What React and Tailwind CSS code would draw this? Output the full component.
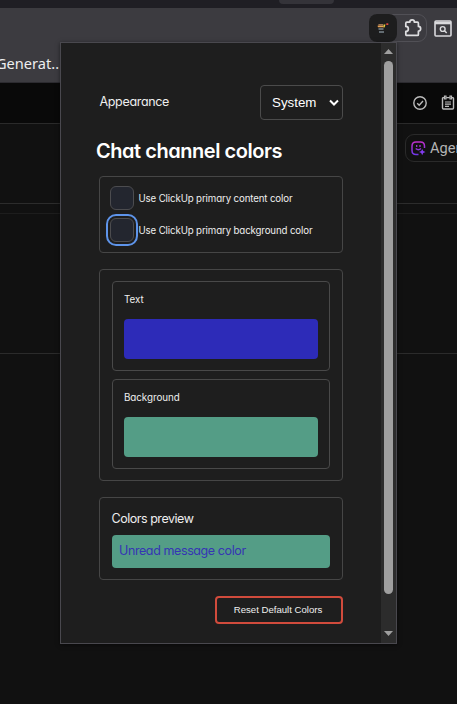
import React from "react";

const brandFont = "font-['Inter','Liberation_Sans',sans-serif] [font-feature-settings:'cv11','ss03']";

function Swatch({ label, color }) {
  return (
    <div className="h-[90px] rounded border border-[#494949] px-[11px]">
      <div className="flex h-[37px] items-center pb-px text-[9.8px] tracking-[-0.05px]">
        <span>{label}</span>
      </div>
      <div className={`h-10 rounded ${color}`} />
    </div>
  );
}

function Check({ label, focused }) {
  return (
    <div className="flex h-6 items-center gap-[4.5px]">
      <div
        className={`h-6 w-6 shrink-0 rounded-[6px] border border-[#4c4c4f] bg-[#23262f] ${
          focused ? "outline-2 outline-offset-2 outline-[#5e94ea]" : ""
        }`}
      />
      <span className="whitespace-nowrap pt-0.5 text-[9.7px] tracking-[-0.13px]">{label}</span>
    </div>
  );
}

function Popup() {
  return (
    <div className="absolute left-[60px] top-[42px] flex h-[602px] w-[337px] border border-[#49484e] bg-[#1e1e1e] text-[#eeeeee] shadow-[0_1px_4px_rgba(0,0,0,0.5)]">
      <main className={`w-[320px] pl-[38px] pr-[38px] pt-[42px] ${brandFont}`}>
        <div className="flex h-[35px] items-center justify-between">
          <span className="pl-[0.5px] text-[12.5px] tracking-[-0.33px]">Appearance</span>
          <div className="flex h-[35px] w-[83px] items-center justify-between rounded border border-[#4b4b4b] pl-[11px] pr-[3px] font-['Liberation_Sans',sans-serif] text-[13.33px] text-white">
            <span>System</span>
            <svg width="10" height="8" viewBox="0 0 10 8" fill="none" stroke="white" strokeWidth="2">
              <path d="M1 1.5 5 5.5 9 1.5" />
            </svg>
          </div>
        </div>
        <h1 className="-ml-[3px] mt-[15px] h-8 whitespace-nowrap text-[20px] font-semibold leading-8 tracking-[-0.46px] text-white">
          Chat channel colors
        </h1>
        <section className="mt-[9px] flex h-[77px] flex-col gap-2 rounded border border-[#464646] px-2.5 pt-[9px]">
          <Check label="Use ClickUp primary content color" />
          <Check label="Use ClickUp primary background color" focused />
        </section>
        <section className="mt-4 flex h-[212px] flex-col gap-2 rounded border border-[#464646] px-3 pt-[11px]">
          <Swatch label="Text" color="bg-[#2d2bb8]" />
          <Swatch label="Background" color="bg-[#549d86]" />
        </section>
        <section className="mt-4 h-[83px] rounded border border-[#464646] px-3 pt-[11px]">
          <div className="-ml-[0.5px] h-[26px] text-[12.5px] leading-[19px] tracking-[-0.47px]">Colors preview</div>
          <div className="flex h-[33px] items-center rounded bg-[#549d86] pl-[7px] text-[12.5px] tracking-[-0.4px] text-[#3535b4]">
            Unread message color
          </div>
        </section>
        <button className="ml-auto mt-4 flex h-7 w-32 items-center justify-center whitespace-nowrap rounded border-2 border-[#d14b3c] pr-0.5 pt-px font-['Liberation_Sans',sans-serif] text-[9.6px]">
          Reset Default Colors
        </button>
      </main>
      <div className="flex w-[15px] flex-col items-center bg-[#2c2c2c] pt-1.5">
        <svg width="9" height="5" viewBox="0 0 9 5" fill="#9f9f9f"><path d="M0 5 4.5 0 9 5Z" /></svg>
        <div className="mt-[7px] h-[533px] w-[9px] rounded-full bg-[#9f9f9f]" />
        <svg className="mt-[37px]" width="9" height="5" viewBox="0 0 9 5" fill="#9f9f9f"><path d="M0 0 4.5 5 9 0Z" /></svg>
      </div>
    </div>
  );
}

function ExtensionLogo() {
  return (
    <svg width="12" height="11" viewBox="0 0 12 11">
      <path d="M1.5 1.2H6V2.6H1.2Z" fill="#c99564" />
      <path d="M0.5 2.8H6.5V4.2H1Z" fill="#e9a354" />
      <path d="M6.5 1.5H8.5L7.5 4.5H6.5Z" fill="#ead13e" />
      <path d="M9.3 .3H11.3V2H9.3Z" fill="#e44740" />
      <path d="M1.5 6H6.5M2 9H7" stroke="#7b878e" strokeWidth="1.4" />
    </svg>
  );
}

export default function App() {
  return (
    <div className="relative h-[704px] w-[457px] overflow-hidden bg-[#111111] font-['Noto_Sans',sans-serif]">
      <div className="flex h-2 bg-[#1f1e24] pl-[279px]">
        <div className="h-1 w-[55px] rounded-b-md bg-[#343339]" />
      </div>
      <div className="h-[75px] border-b border-[#2c2b30] bg-[#3c3b40]">
        <div className="flex h-10 items-center pl-[369px]">
          <div className="flex h-7 w-[58px] items-center rounded-[9px] border border-[#515056]">
            <div className="-ml-px flex h-7 w-7 shrink-0 items-center justify-center rounded-[8px] bg-[#1d1d1e]">
              <ExtensionLogo />
            </div>
            <svg className="ml-[7px]" width="18" height="18" viewBox="0 0 18 18" fill="none" stroke="#dedee0" strokeWidth="1.7" strokeLinejoin="round">
              <path d="M2.8 3.2H5.8C5.8 .2 10.4 .2 10.4 3.2H13.4Q14.4 3.2 14.4 4.2V7.4C17.4 7.4 17.4 12.2 14.4 12.2V15.4Q14.4 16.4 13.4 16.4H2.8Q1.8 16.4 1.8 15.4V12.4C5.2 12.4 5.2 7.4 1.8 7.4V4.2Q1.8 3.2 2.8 3.2Z" />
            </svg>
          </div>
          <svg className="ml-[7px] shrink-0" width="18" height="17" viewBox="0 0 18 17" fill="none" stroke="#d9d9dc">
            <rect x="1" y="1" width="16" height="15" rx="1" strokeWidth="1.6" />
            <path d="M1 3H17" strokeWidth="2.6" />
            <circle cx="8.7" cy="9" r="2.4" strokeWidth="1.4" />
            <path d="m10.5 10.8 2.2 2.2" strokeWidth="1.5" />
          </svg>
        </div>
        <div className="-ml-[4px] pt-[4px] text-[14.6px] leading-[22px] text-[#eeeeef]">Generat..</div>
      </div>
      <div className="flex h-[41px] items-center gap-3.5 border-b border-[#2a2a2a] bg-[#090909] pl-[413px]">
        <svg className="shrink-0" width="14" height="14" viewBox="0 0 14 14" fill="none" stroke="#bcbcbc" strokeWidth="1.4">
          <circle cx="7" cy="7" r="6.2" />
          <path d="m4.2 7.2 2 2L10 5.1" />
        </svg>
        <svg className="mb-px shrink-0" width="14" height="15" viewBox="0 0 14 15" fill="none" stroke="#bcbcbc" strokeWidth="1.4">
          <path d="M3 2.6H2.5Q1.5 2.6 1.5 3.6V13Q1.5 14 2.5 14H11.5Q12.5 14 12.5 13V3.6Q12.5 2.6 11.5 2.6H11M5.3 2.6H8.7" />
          <path d="M3.5 1H5V4H3.5ZM9 1H10.5V4H9ZM4 7H10M4 9.2H10M4 11.4H8" strokeWidth="1.2" />
        </svg>
      </div>
      <div className="h-20 border-b border-[#2c2c2c] pl-[405px] pt-2.5">
        <div className="flex h-7 w-24 items-center rounded-[9px] border border-[#2a2a2a] pl-[5px]">
          <svg className="shrink-0" width="15" height="15" viewBox="0 0 15 15" fill="none">
            <defs>
              <linearGradient id="agent" x1="0" y1="0" x2="0" y2="15" gradientUnits="userSpaceOnUse">
                <stop stopColor="#c22ec8" />
                <stop offset="1" stopColor="#6937ec" />
              </linearGradient>
            </defs>
            <path d="M7.5 13.5H5Q1 13.5 1 9.5V5.2Q1 1 5 1H9.5Q13.5 1 13.5 5.2V7" stroke="url(#agent)" strokeWidth="1.5" />
            <path d="M5.7 4V6M9 4V6M4.7 7.5Q7.4 10 10 7.5" stroke="url(#agent)" strokeWidth="1.3" />
            <path d="m11.2 8 1 2 2.3 1-2.3 1-1 2.3-1-2.3-2.2-1 2.2-1Z" fill="#843cf0" />
          </svg>
          <span className="ml-[4px] pt-0.5 font-['Roboto',sans-serif] text-[14.6px] text-[#b4b4b4]">Agents</span>
        </div>
      </div>
      <div className="h-2.5 border-b border-[#1d1d1d]" />
      <div className="h-[140px] border-b border-[#2b2b2b]" />
      <Popup />
    </div>
  );
}
